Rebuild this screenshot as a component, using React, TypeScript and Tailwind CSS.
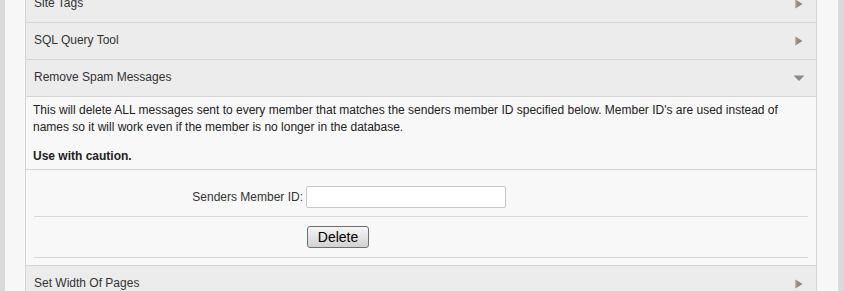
import React from "react";

function RightArrow() {
  return (
    <svg width="10" height="10" viewBox="0 0 10 10">
      <polygon points="1.5,0.5 8.5,5 1.5,9.5" fill="#8a8a8a" />
      <rect x="1.5" y="1" width="1" height="8" fill="#dba571" />
    </svg>
  );
}

function DownArrow() {
  return (
    <svg width="10" height="10" viewBox="0 0 10 10">
      <polygon points="-0.5,2.5 10.5,2.5 5,8" fill="#8a8a8a" />
    </svg>
  );
}

function Row({ title, open }: { title: string; open?: boolean }) {
  return (
    <div className="h-[37px] flex items-center justify-between pl-[8px] pr-[12px] bg-[#ececec] border-b border-[#d6d6d6]">
      <span className="mb-[3px] text-[12px] text-[#333]">{title}</span>
      {open ? <DownArrow /> : <RightArrow />}
    </div>
  );
}

export default function App() {
  return (
    <div
      className="h-[291px] overflow-hidden bg-[#dadada] flex"
      style={{ fontFamily: '"Liberation Sans", Arial, sans-serif' }}
    >
      <div className="ml-[5px] mr-[6px] flex-1 bg-[#f7f7f7] pl-[20px] pr-[21px]">
        <div className="-mt-[14px] border-x border-[#d6d6d6]">
          <Row title="Site Tags" />
          <Row title="SQL Query Tool" />
          <Row title="Remove Spam Messages" open />

          {/* spam tool body */}
          <div className="bg-[#f8f8f8] border-b border-[#d6d6d6] px-[7px] pt-[5px] pb-[4px] text-[12px] leading-[17px] text-[#222]">
            <p>
              This will delete ALL messages sent to every member that matches the senders member ID specified below. Member ID's are used instead of names so it will work even if the member is no longer in the database.
            </p>
            <p className="mt-[12px] font-bold">Use with caution.</p>
          </div>

          <div className="bg-[#f8f8f8] border-b border-[#d6d6d6] px-[8px] pt-[16px] pb-[7px]">
            <div className="flex items-center h-[22px]">
              <label className="w-[269px] text-right text-[12px] text-[#333]">Senders Member ID:</label>
              <input
                type="text"
                className="ml-[3px] w-[200px] h-[22px] bg-white border border-[#c8c8c8] rounded-[2px] outline-none px-1 text-[12px]"
              />
            </div>
            <div className="mt-[8px] border-t border-[#d8d8d8]" />
            <div className="flex pl-[273px] pt-[9px] pb-[9px]">
              <button
                type="button"
                className="w-[62px] h-[22px] rounded-[3px] border border-[#707070] bg-gradient-to-b from-[#f6f6f6] to-[#d2d2d2] text-[14px] text-black leading-none"
              >
                Delete
              </button>
            </div>
            <div className="border-t border-[#d8d8d8]" />
          </div>

          <Row title="Set Width Of Pages" />
        </div>
      </div>
    </div>
  );
}
